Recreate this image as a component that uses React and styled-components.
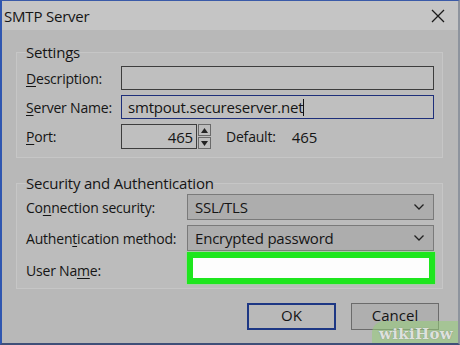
import styled, { createGlobalStyle } from 'styled-components';

const GlobalStyle = createGlobalStyle`
  html, body {
    margin: 0;
    padding: 0;
    background: #b7b7b7;
  }
  * {
    box-sizing: border-box;
  }
`;

const Window = styled.div`
  position: relative;
  width: 460px;
  height: 345px;
  overflow: hidden;
  background: #b8b8b8;
  border-top: 1px solid #3a5aa8;
  border-left: 2px solid #2f56b0;
  border-right: 2px solid #8e949e;
  border-bottom: 2px solid #3f4f78;
  font-family: 'Open Sans', 'Noto Sans', sans-serif;
  font-size: 14px;
  color: #151515;
  display: flex;
  flex-direction: column;
`;

const TitleBar = styled.div`
  height: 29px;
  flex: none;
  background: #c5c5c5;
  display: flex;
  align-items: center;
  justify-content: space-between;
  padding: 0 13px 0 2px;
`;

const Title = styled.div`
  font-size: 15px;
  letter-spacing: -0.2px;
`;

const Body = styled.div`
  padding: 0 15px 0 14px;
  display: flex;
  flex-direction: column;
`;

const Group = styled.fieldset`
  margin: ${(p) => p.$top}px 0 0 0;
  padding: 0 8px ${(p) => p.$bottom}px 9px;
  border: 1px solid #c6c6c6;
  background: #bcbcbc;
  min-width: 0;
`;

const Legend = styled.legend`
  padding: 0;
  line-height: 20px;
  font-size: 15px;
  letter-spacing: -0.2px;
`;

const Form = styled.div`
  display: grid;
  grid-template-columns: ${(p) => p.$label}px 1fr;
  row-gap: 5px;
  align-items: center;
  margin-top: ${(p) => p.$gap}px;
`;

const Label = styled.label`
  letter-spacing: -0.2px;
  white-space: nowrap;
`;

const Key = styled.span`
  text-decoration: underline;
  text-underline-offset: 2px;
`;

const TextBox = styled.div`
  height: 24px;
  border: 1px solid ${(p) => (p.$focused ? '#1e2f7a' : '#3d3d3d')};
  background: #bfbfbf;
  padding: 0 6px;
  display: flex;
  align-items: center;
  font-size: 15px;
  letter-spacing: -0.2px;
`;

const Caret = styled.span`
  width: 1px;
  height: 17px;
  background: #111;
`;

const PortRow = styled.div`
  display: flex;
  align-items: center;
  height: 25px;
`;

const PortBox = styled(TextBox)`
  width: 76px;
  height: 25px;
  justify-content: flex-end;
  padding: 0 3px;
`;

const Spinner = styled.div`
  width: 13px;
  height: 25px;
  margin-left: 1px;
  display: flex;
  flex-direction: column;
  gap: 1px;
`;

const SpinButton = styled.div`
  flex: 1;
  border: 1px solid #6a6a6a;
  background: #bdbdbd;
  display: flex;
  align-items: center;
  justify-content: center;
`;

const DefaultText = styled.span`
  margin-left: 15px;
  letter-spacing: -0.2px;
`;

const DefaultValue = styled.span`
  margin-left: 16px;
  font-size: 15px;
`;

const Select = styled.div`
  height: 26px;
  border: 1px solid #7a7a7a;
  background: #adadad;
  display: flex;
  align-items: center;
  justify-content: space-between;
  padding: 0 9px 0 7px;
  font-size: 15px;
  letter-spacing: -0.2px;
`;

const Highlight = styled.div`
  height: 32px;
  margin-top: ${(p) => p.$shift}px;
  margin-right: -1px;
  border: 6px solid #1ee61e;
  background: #fdfdfd;
  box-shadow: 0 0 2px #7cf07c;
`;

const Buttons = styled.div`
  display: flex;
  justify-content: flex-end;
  gap: 15px;
  margin-top: 14px;
  padding-right: 4px;
`;

const Button = styled.div`
  width: ${(p) => p.$w}px;
  height: 27px;
  display: flex;
  align-items: center;
  justify-content: center;
  font-size: 15px;
  line-height: 17px;
  padding-bottom: 2px;
  background: ${(p) => (p.$primary ? '#b9b9b9' : '#afafaf')};
  border: ${(p) => (p.$primary ? '2px solid #1d3784' : '1px solid #6b6b6b')};
`;

const Watermark = styled.div`
  position: absolute;
  right: -2px;
  bottom: -2px;
  width: 88px;
  height: 24px;
  border-top-left-radius: 12px;
  background: rgba(150, 205, 120, 0.55);
  display: flex;
  align-items: center;
  justify-content: center;
  padding-top: 2px;
  font-family: 'DejaVu Serif', serif;
  font-weight: bold;
  font-size: 15px;
  line-height: 16px;
  letter-spacing: 0.3px;
  color: rgba(240, 245, 240, 0.85);
  text-shadow: 0 0 1px #777;
`;

const Chevron = () => (
  <svg width="10" height="6" viewBox="0 0 10 6">
    <polyline points="0.5,0.5 5,5 9.5,0.5" fill="none" stroke="#222" strokeWidth="1.3" />
  </svg>
);

const Arrow = ({ up }) => (
  <svg width="7" height="5" viewBox="0 0 7 5">
    <polygon points={up ? '0,5 3.5,0 7,5' : '0,0 3.5,5 7,0'} fill="#222" />
  </svg>
);

const CloseIcon = () => (
  <svg width="14" height="14" viewBox="0 0 14 14">
    <path d="M1 1 L13 13 M13 1 L1 13" stroke="#1a1a1a" strokeWidth="1.3" />
  </svg>
);

export default function App() {
  return (
    <>
      <GlobalStyle />
      <Window>
        <TitleBar>
          <Title>SMTP Server</Title>
          <CloseIcon />
        </TitleBar>
        <Body>
          <Group $top={12} $bottom={8}>
            <Legend>Settings</Legend>
            <Form $label={95} $gap={4}>
              <Label>
                <Key>D</Key>escription:
              </Label>
              <TextBox />
              <Label>
                <Key>S</Key>erver Name:
              </Label>
              <TextBox $focused>
                smtpout.secureserver.net
                <Caret />
              </TextBox>
              <Label>
                <Key>P</Key>ort:
              </Label>
              <PortRow>
                <PortBox>465</PortBox>
                <Spinner>
                  <SpinButton>
                    <Arrow up />
                  </SpinButton>
                  <SpinButton>
                    <Arrow />
                  </SpinButton>
                </Spinner>
                <DefaultText>Default:</DefaultText>
                <DefaultValue>465</DefaultValue>
              </PortRow>
            </Form>
          </Group>
          <Group $top={15} $bottom={4}>
            <Legend>Security and Authentication</Legend>
            <Form $label={161} $gap={1}>
              <Label>
                Co<Key>n</Key>nection security:
              </Label>
              <Select>
                SSL/TLS
                <Chevron />
              </Select>
              <Label>
                Authen<Key>t</Key>ication method:
              </Label>
              <Select>
                Encrypted password
                <Chevron />
              </Select>
              <Label>
                User Na<Key>m</Key>e:
              </Label>
              <Highlight $shift={-4} />
            </Form>
          </Group>
          <Buttons>
            <Button $primary $w={89}>
              OK
            </Button>
            <Button $w={88}>Cancel</Button>
          </Buttons>
        </Body>
        <Watermark>wikiHow</Watermark>
      </Window>
    </>
  );
}
